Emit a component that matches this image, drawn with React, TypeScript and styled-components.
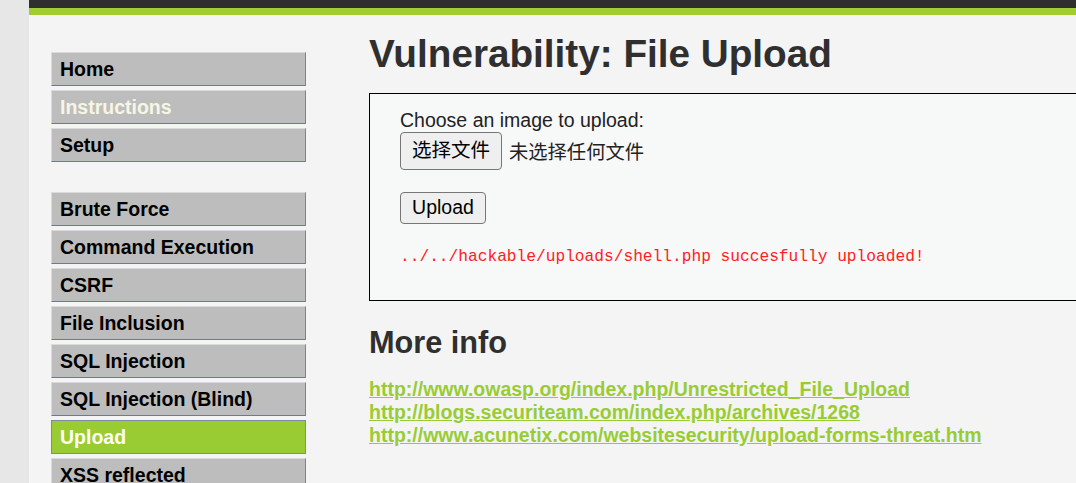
import styled, { createGlobalStyle } from "styled-components";

const GlobalStyle = createGlobalStyle`
  html, body {
    margin: 0;
    padding: 0;
    overflow: hidden;
    background: #e7e7e7;
  }
  body {
    font-family: "Liberation Sans", Arial, "Noto Sans CJK SC", sans-serif;
  }
`;

const menuGroups: string[][] = [
  ["Home", "Instructions", "Setup"],
  [
    "Brute Force",
    "Command Execution",
    "CSRF",
    "File Inclusion",
    "SQL Injection",
    "SQL Injection (Blind)",
    "Upload",
    "XSS reflected",
  ],
];

const links = [
  "http://www.owasp.org/index.php/Unrestricted_File_Upload",
  "http://blogs.securiteam.com/index.php/archives/1268",
  "http://www.acunetix.com/websitesecurity/upload-forms-threat.htm",
];

const App = (): JSX.Element => {
  return (
    <>
      <GlobalStyle />
      <Page>
        <Wrapper>
          <Header />
          <Body>
            <Menu>
              {menuGroups.map((group, gi) => (
                <MenuGroup key={gi}>
                  {group.map((item) => (
                    <MenuItem
                      key={item}
                      $selected={item === "Upload"}
                      $visited={item === "Instructions"}
                    >
                      {item}
                    </MenuItem>
                  ))}
                </MenuGroup>
              ))}
            </Menu>
            <Content>
              <Title>Vulnerability: File Upload</Title>
              <VulnBox>
                <Label>Choose an image to upload:</Label>
                <FileRow>
                  <Button $cjk>选择文件</Button>
                  <FileName>未选择任何文件</FileName>
                </FileRow>
                <UploadButton>Upload</UploadButton>
                <Message>
                  ../../hackable/uploads/shell.php succesfully uploaded!
                </Message>
              </VulnBox>
              <SubTitle>More info</SubTitle>
              <LinkList>
                {links.map((l) => (
                  <InfoLink key={l} href="#">
                    {l}
                  </InfoLink>
                ))}
              </LinkList>
            </Content>
          </Body>
        </Wrapper>
      </Page>
    </>
  );
};

export default App;

const Page = styled.div`
  display: flex;
  padding-left: 29px;
  height: 483px;
  overflow: hidden;
`;

const Wrapper = styled.div`
  flex: 1;
  background: #f4f4f4;
  display: flex;
  flex-direction: column;
  min-width: 0;
`;

const Header = styled.div`
  flex-shrink: 0;
  height: 8px;
  background: #2f2f2f;
  border-bottom: 7px solid #a2cd32;
`;

const Body = styled.div`
  flex-shrink: 0;
  display: flex;
  align-items: flex-start;
  padding-left: 22px;
`;

const Menu = styled.div`
  width: 255px;
  flex-shrink: 0;
  margin-top: 37px;
  display: flex;
  flex-direction: column;
  gap: 30px;
`;

const MenuGroup = styled.div`
  display: flex;
  flex-direction: column;
  gap: 4px;
`;

const MenuItem = styled.div<{ $selected?: boolean; $visited?: boolean }>`
  height: 32px;
  line-height: 32px;
  padding-left: 8px;
  border: 1px solid;
  border-color: ${(p) =>
    p.$selected ? "#7a8aa8" : "#dadada #7c8491 #6f7b8d #dadada"};
  background: ${(p) => (p.$selected ? "#99cc33" : "#bdbdbd")};
  color: ${(p) =>
    p.$selected ? "#fffff2" : p.$visited ? "#f6f6e4" : "#000000"};
  font-size: 19.5px;
  font-weight: bold;
  white-space: nowrap;
`;

const Content = styled.div`
  margin-left: 63px;
  margin-top: 17px;
  width: 800px;
  flex-shrink: 0;
  color: #2f2f2f;
`;

const Title = styled.h1`
  margin: 0;
  font-size: 38.7px;
  line-height: 44px;
  font-weight: bold;
  color: #2f2f2f;
`;

const VulnBox = styled.div`
  margin-top: 17px;
  border: 1px solid #000;
  background: #f7f8f8;
  padding: 15px 30px 33px;
  display: flex;
  flex-direction: column;
  align-items: flex-start;
`;

const Label = styled.div`
  font-size: 19.5px;
  line-height: 22px;
  color: #222;
`;

const FileRow = styled.div`
  margin-top: 1px;
  display: flex;
  align-items: center;
  gap: 7px;
`;

const Button = styled.button<{ $cjk?: boolean }>`
  box-sizing: border-box;
  height: ${(p) => (p.$cjk ? "38px" : "32px")};
  padding: 0 11px;
  border: 1px solid #767676;
  border-radius: 4px;
  background: #efefef;
  color: #000;
  font-family: "Liberation Sans", Arial, "Noto Sans CJK SC", sans-serif;
  font-size: 19.5px;
  line-height: 1;
`;

const UploadButton = styled(Button)`
  margin-top: 22px;
  width: 86px;
`;

const FileName = styled.span`
  font-family: "Noto Sans CJK SC", sans-serif;
  font-size: 19.3px;
  color: #222;
`;

const Message = styled.pre`
  margin: 23px 0 0;
  font-family: "Liberation Mono", "DejaVu Sans Mono", monospace;
  font-size: 16.2px;
  line-height: 20px;
  color: #ff2020;
`;

const SubTitle = styled.h2`
  margin: 24px 0 0;
  font-size: 30.7px;
  line-height: 36px;
  font-weight: bold;
  color: #2f2f2f;
`;

const LinkList = styled.div`
  margin-top: 17px;
  display: flex;
  flex-direction: column;
  align-items: flex-start;
`;

const InfoLink = styled.a`
  font-size: 19.5px;
  line-height: 23px;
  font-weight: bold;
  color: #99cc33;
  text-decoration: underline;
`;
